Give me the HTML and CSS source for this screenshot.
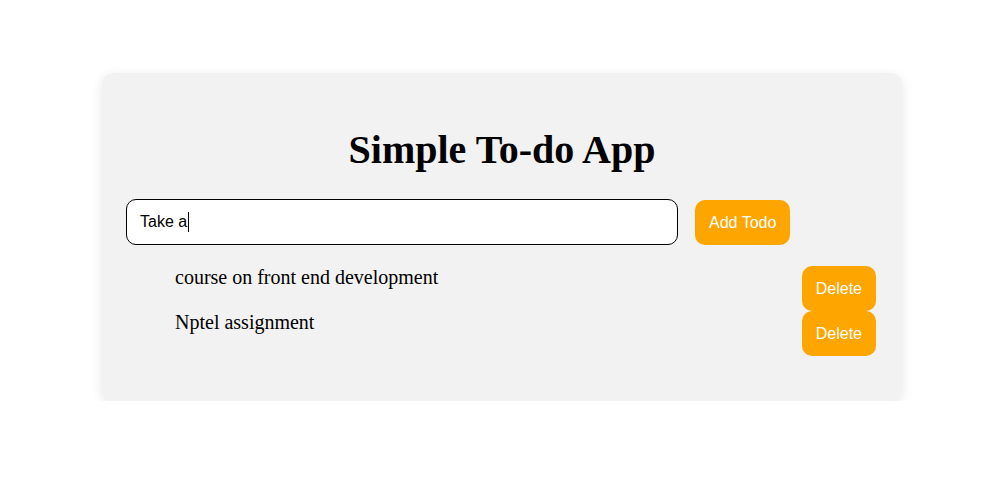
FILE: index.html
```html
<!DOCTYPE html>
<html>
<head>
<meta charset="utf-8">
<link rel="stylesheet" href="styles.css">
</head>
<body>
<div class="card">
  <h1 class="title">Simple To-do App</h1>
  <div class="add-row">
    <div class="field">Take a<span class="caret"></span></div>
    <button class="btn add-btn">Add Todo</button>
  </div>
  <ul class="todos">
    <li class="todo"><span class="todo-text">course on front end development</span><button class="btn del-btn">Delete</button></li>
    <li class="todo"><span class="todo-text">Nptel assignment</span><button class="btn del-btn">Delete</button></li>
  </ul>
</div>
</body>
</html>
```
FILE: styles.css
```css
html, body {
  margin: 0;
  padding: 0;
  background: #ffffff;
}
body {
  font-family: "Liberation Serif", "Times New Roman", serif;
  padding: 73px 0 0 2px;
}
.card {
  width: 800px;
  box-sizing: border-box;
  margin: 0 auto;
  padding: 24px 24px 45px;
  background: #f2f2f2;
  border-radius: 12px;
  box-shadow: 0 3px 12px rgba(0, 0, 0, 0.1);
}
.title {
  margin: 30px 0 27px;
  font-size: 40px;
  line-height: 45px;
  font-weight: bold;
  text-align: center;
  color: #000;
}
.add-row {
  display: flex;
  align-items: center;
  gap: 17px;
}
.field {
  width: 552px;
  height: 46px;
  box-sizing: border-box;
  border: 1px solid #000;
  border-radius: 10px;
  background: #fff;
  padding: 0 13px;
  display: flex;
  align-items: center;
  font-family: "Liberation Sans", Arial, sans-serif;
  font-size: 16px;
  color: #000;
}
.caret {
  display: inline-block;
  width: 1px;
  height: 20px;
  background: #000;
  margin-left: 1px;
}
.btn {
  border: none;
  background: #ffa500;
  color: #fff;
  font-family: "Liberation Sans", Arial, sans-serif;
  font-size: 16px;
  height: 45px;
  border-radius: 10px;
  cursor: pointer;
}
.add-btn {
  padding: 0 14px;
  margin-top: 1px;
}
.todos {
  list-style: none;
  margin: 21px 0 0;
  padding: 0 2px 0 49px;
}
.todo {
  display: flex;
  justify-content: space-between;
  align-items: flex-start;
}
.todo-text {
  font-size: 20px;
  line-height: 23px;
  color: #000;
}
.del-btn {
  padding: 0 14px;
}
```
